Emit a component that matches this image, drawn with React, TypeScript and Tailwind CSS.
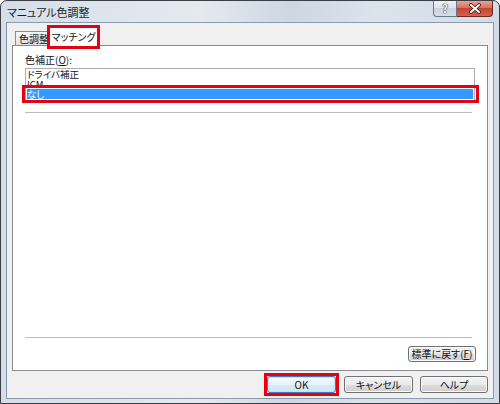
import React from "react";

function Btn({
  className = "",
  def = false,
  children,
}: {
  className?: string;
  def?: boolean;
  children: React.ReactNode;
}) {
  const skin = def
    ? "border-[#3c7fb1] bg-[linear-gradient(#f4f9fd,#e8f2fa_50%,#dbeaf6_50%,#d2e5f4)] shadow-[inset_0_0_0_1px_#bfe3fb]"
    : "border-[#707070] bg-[linear-gradient(#f2f2f2,#ebebeb_50%,#dddddd_50%,#cfcfcf)] shadow-[inset_0_0_0_1px_#fbfbfb]";
  return (
    <div
      className={`flex items-center justify-center rounded-[3px] border text-[10px] leading-none text-[#111] whitespace-nowrap ${skin} ${className}`}
    >
      {children}
    </div>
  );
}

export default function App() {
  return (
    <div className="w-[500px] h-[404px] flex flex-col border border-[#3b3f45] rounded-t-[7px] bg-[linear-gradient(90deg,#d5dee8,#e4eaf0_40%,#cdd7e2_58%,#dbe3eb_75%,#d3dce6)] overflow-hidden font-['Noto_Sans_CJK_JP',sans-serif] [font-feature-settings:'palt'] text-[#161616]">
      {/* title bar */}
      <div className="h-[21px] shrink-0 flex items-start justify-between">
        <div className="pl-[6px] pt-[5px] text-[11px] leading-[12px] text-[#1b1b1b]">
          マニュアル色調整
        </div>
        <div className="flex mr-[6px] -mt-px">
          <div className="w-[24px] h-[17px] rounded-bl-[4px] border border-t-0 border-[#6b7785] bg-[linear-gradient(#eef2f6,#dde4eb_50%,#c9d2dc_50%,#d6dde6)] flex items-center justify-center">
            <span className="text-[11px] leading-none font-bold text-white [text-shadow:0_0_1px_#2d3640,0_0_1px_#2d3640,0_0_1px_#2d3640]">
              ?
            </span>
          </div>
          <div className="w-[36px] h-[17px] rounded-br-[4px] border border-l-0 border-t-0 border-[#6a2a22] bg-[linear-gradient(#e9ab9c,#d8705e_50%,#c3412f_50%,#d4634f)] flex items-center justify-center">
            <svg width="14" height="11" viewBox="0 0 14 11">
              <path d="M3 2 L11 9 M11 2 L3 9" stroke="#3a1410" strokeWidth="3.6" strokeLinecap="round" />
              <path d="M3 2 L11 9 M11 2 L3 9" stroke="#ffffff" strokeWidth="2" strokeLinecap="round" />
            </svg>
          </div>
        </div>
      </div>

      {/* client area */}
      <div className="flex-1 mx-[5px] mb-[4px] border border-[#8a9bad] bg-[#f0f0f0] flex flex-col pt-[2px]">
        {/* tabs */}
        <div className="flex items-end h-[20px] shrink-0 pl-[8px]">
          <div className="h-[14px] w-[37px] border border-b-0 border-[#898c95] bg-[linear-gradient(#f7f7f7,#e3e3e3)] text-[10px] leading-[13px] pl-[3px] whitespace-nowrap overflow-hidden">
            色調整
          </div>
          <div className="relative z-10 -ml-[5px] -mb-[4px] h-[24px] w-[53px] border-[3px] border-[#e60012] bg-white flex items-center justify-center text-[10px] leading-none whitespace-nowrap">
            マッチング
          </div>
        </div>

        {/* panel */}
        <div className="ml-[5px] mr-[5px] h-[326px] shrink-0 border border-[#898c95] bg-white flex flex-col pl-[12px] pt-[8px]">
          <div className="text-[10px] leading-[12px]">
            色補正(<span className="underline">O</span>):
          </div>
          <div className="relative mt-[2px] w-[450px] border border-[#abadb3] pb-[1px]">
            <div className="h-[10px] pl-[1px] text-[9.5px] leading-[10px] whitespace-nowrap">
              ドライバ補正
            </div>
            <div className="h-[10px] pl-[1px] text-[9.5px] leading-[10px] whitespace-nowrap">ICM</div>
            <div className="h-[10px] mx-[1px] bg-[#3399ff] text-white text-[9.5px] leading-[10px] whitespace-nowrap">
              なし
            </div>
            <div className="absolute left-[-4px] right-[-5px] top-[16px] h-[18px] border-[3px] border-[#e60012]" />
          </div>
          <div className="mt-[11px] w-[447px] h-px bg-[#bdbdbd]" />

          <div className="mt-auto w-[447px] h-px bg-[#bdbdbd]" />
          <div className="flex justify-end pr-[11px] mt-[8px] mb-[8px]">
            <Btn className="w-[68px] h-[16px]">
              標準に戻す(<span className="underline">F</span>)
            </Btn>
          </div>
        </div>

        {/* dialog buttons */}
        <div className="flex items-center justify-end h-[23px] mt-[2px] pr-[5px]">
          <div className="border-[3px] border-[#e60012] mr-[5px]">
            <Btn def className="w-[69px] h-[17px]">
              OK
            </Btn>
          </div>
          <Btn className="w-[69px] h-[17px] mr-[7px]">キャンセル</Btn>
          <Btn className="w-[68px] h-[17px]">ヘルプ</Btn>
        </div>
      </div>
    </div>
  );
}
